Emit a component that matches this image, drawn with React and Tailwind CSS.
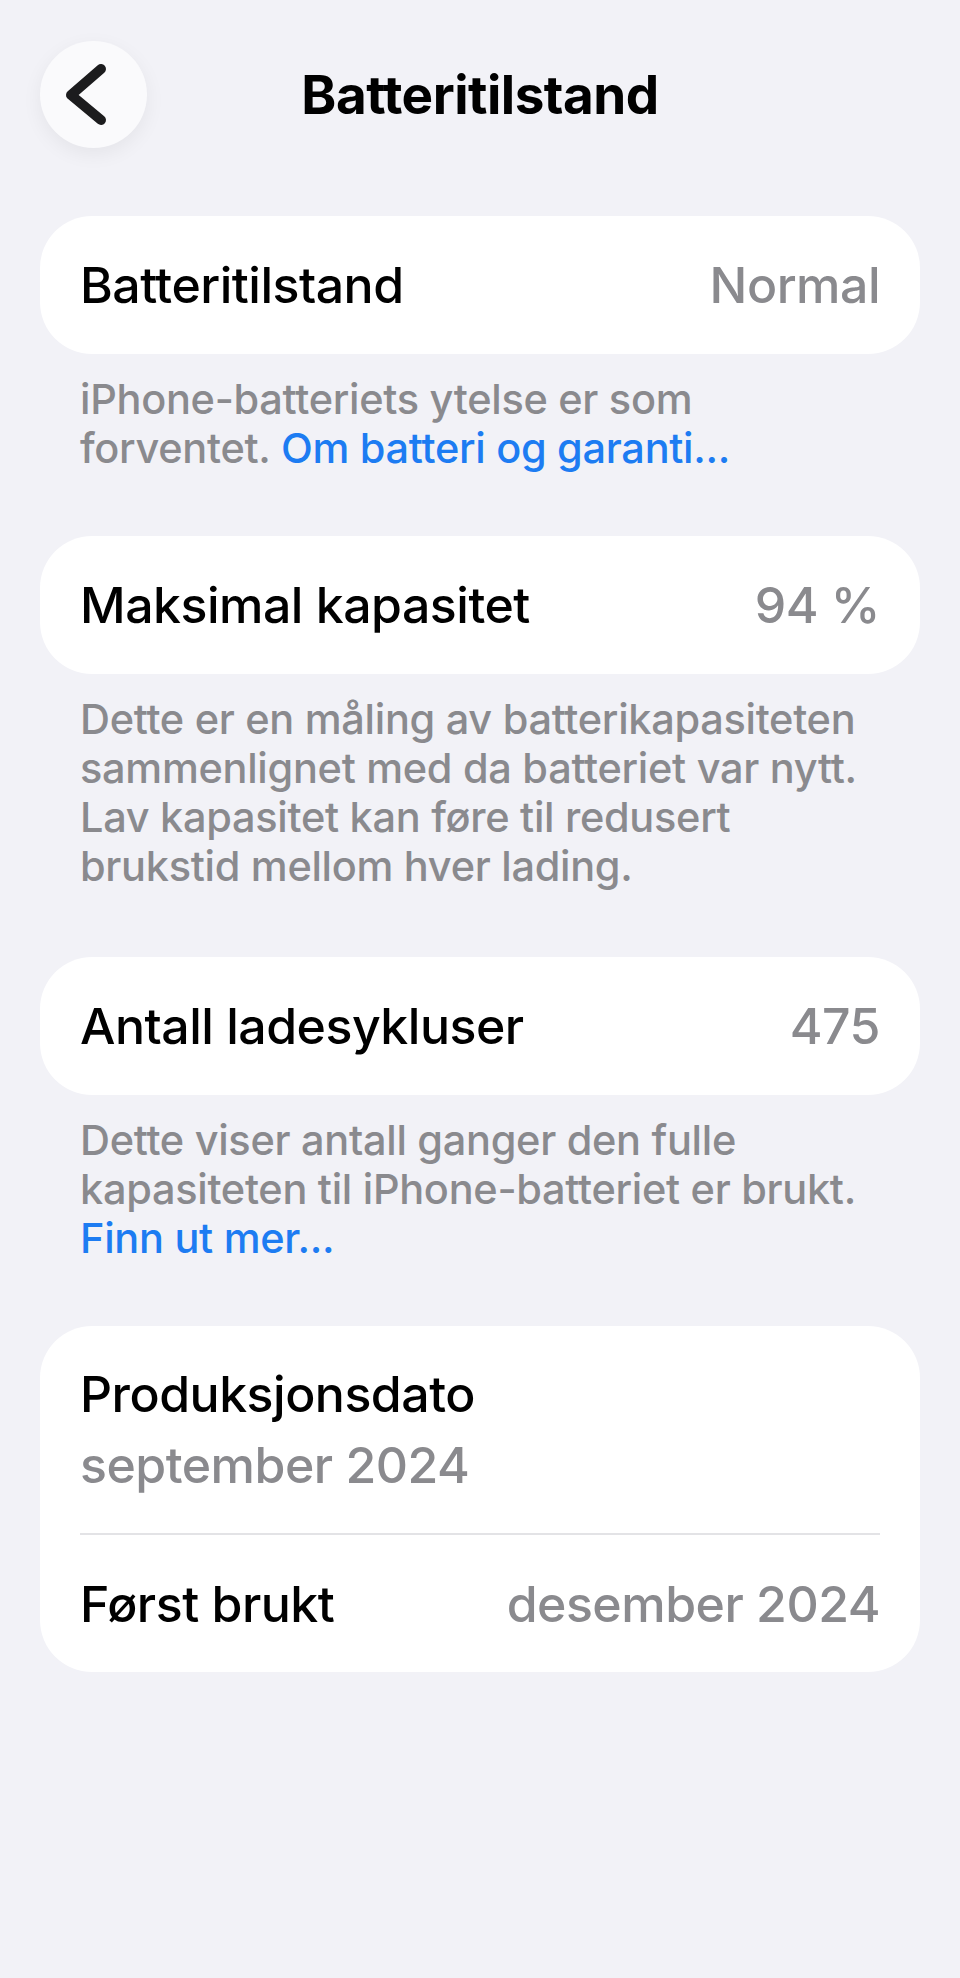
import React from 'react'

function BackButton() {
  return (
    <button
      type="button"
      aria-label="Tilbake"
      className="w-[107px] h-[107px] shrink-0 rounded-full bg-[#fafafc] shadow-[0_6px_20px_rgba(0,0,0,0.06)] flex items-center justify-center"
    >
      <svg width="107" height="107" viewBox="0 0 107 107" fill="none">
        <path
          d="M61 28 L31 54 L61 79"
          stroke="#1c1c1e"
          strokeWidth="10"
          strokeLinecap="round"
          strokeLinejoin="round"
        />
      </svg>
    </button>
  )
}

function Row({ label, value }) {
  return (
    <div className="bg-white rounded-[52px] h-[138px] px-[40px] flex items-center justify-between">
      <span className="text-[50px] leading-[62px] font-medium tracking-[-0.5px] text-black">{label}</span>
      <span className="text-[50px] leading-[62px] font-medium tracking-[-0.5px] text-[#8a8a8e]">{value}</span>
    </div>
  )
}

function Footer({ children }) {
  return (
    <p className="mt-[21px] px-[40px] text-[41.5px] leading-[49px] font-medium tracking-[-0.3px] text-[#8a8a8e]">
      {children}
    </p>
  )
}

export default function App() {
  return (
    <div className="min-h-[1978px] bg-[#f2f2f7] font-['Inter','Liberation_Sans',sans-serif]">
      {/* Nav bar */}
      <div className="px-[40px] pt-[41px] flex items-center">
        <BackButton />
        <h1 className="flex-1 text-center text-[53px] leading-[62px] font-bold tracking-[-0.5px] text-black">
          Batteritilstand
        </h1>
        <div className="w-[107px] shrink-0" />
      </div>

      <div className="px-[40px] mt-[68px] pb-[40px]">
        <Row label="Batteritilstand" value="Normal" />
        <Footer>
          iPhone-batteriets ytelse er som
          <br />
          forventet. <span className="text-[#1d7cf2]">Om batteri og garanti...</span>
        </Footer>

        <div className="mt-[63px]">
          <Row label="Maksimal kapasitet" value="94 %" />
        </div>
        <Footer>
          Dette er en måling av batterikapasiteten
          <br />
          sammenlignet med da batteriet var nytt.
          <br />
          Lav kapasitet kan føre til redusert
          <br />
          brukstid mellom hver lading.
        </Footer>

        <div className="mt-[66px]">
          <Row label="Antall ladesykluser" value="475" />
        </div>
        <Footer>
          Dette viser antall ganger den fulle
          <br />
          kapasiteten til iPhone-batteriet er brukt.
          <br />
          <span className="text-[#1d7cf2]">Finn ut mer...</span>
        </Footer>

        <div className="mt-[63px] bg-white rounded-[52px]">
          <div className="px-[40px] pt-[37px] pb-[37px]">
            <div className="text-[50px] leading-[62px] font-medium tracking-[-0.5px] text-black">Produksjonsdato</div>
            <div className="mt-[9px] text-[50px] leading-[62px] font-medium tracking-[-0.5px] text-[#8a8a8e]">september 2024</div>
          </div>
          <div className="mx-[40px] h-[2px] bg-[#e3e3e6]" />
          <div className="px-[40px] pt-[38px] pb-[37px] flex items-center justify-between">
            <span className="text-[50px] leading-[62px] font-medium tracking-[-0.5px] text-black">Først brukt</span>
            <span className="text-[50px] leading-[62px] font-medium tracking-[-0.5px] text-[#8a8a8e]">desember 2024</span>
          </div>
        </div>
      </div>
    </div>
  )
}
